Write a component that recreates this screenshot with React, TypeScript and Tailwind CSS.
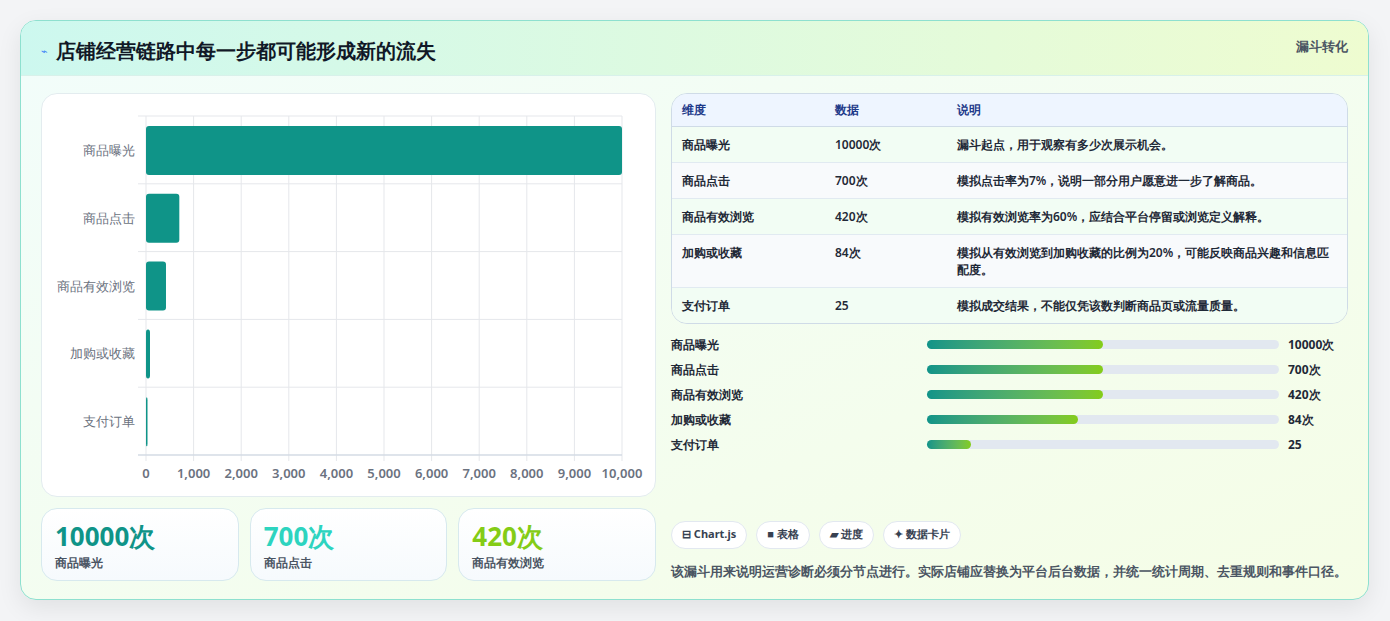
import React from 'react';

const rows = [
  { name: '商品曝光', value: '10000次', note: '漏斗起点，用于观察有多少次展示机会。' },
  { name: '商品点击', value: '700次', note: '模拟点击率为7%，说明一部分用户愿意进一步了解商品。' },
  { name: '商品有效浏览', value: '420次', note: '模拟有效浏览率为60%，应结合平台停留或浏览定义解释。' },
  { name: '加购或收藏', value: '84次', note: '模拟从有效浏览到加购收藏的比例为20%，可能反映商品兴趣和信息匹配度。' },
  { name: '支付订单', value: '25', note: '模拟成交结果，不能仅凭该数判断商品页或流量质量。' },
];

const chartData = [10000, 700, 420, 84, 25];
const progress = [50, 50, 50, 43, 12.5];

const FunnelChart = () => {
  const left = 104, right = 580, top = 22, bottom = 361;
  const w = right - left;
  const rowH = (bottom - top) / 5;
  return (
    <svg width="615" height="403" className="block">
      {Array.from({ length: 11 }).map((_, i) => {
        const x = left + (w * i) / 10;
        return (
          <g key={i}>
            <line x1={x} y1={top} x2={x} y2={bottom + 6} stroke="#e5e7eb" />
            <text x={x} y={384} textAnchor="middle" fontSize="13" fill="#6b7280" fontWeight="600">
              {(i * 1000).toLocaleString('en-US')}
            </text>
          </g>
        );
      })}
      {Array.from({ length: 6 }).map((_, i) => (
        <line key={i} x1={left - 8} y1={top + rowH * i} x2={right} y2={top + rowH * i} stroke="#e5e7eb" />
      ))}
      <line x1={left - 8} y1={bottom} x2={right} y2={bottom} stroke="#cbd5e1" />
      {chartData.map((v, i) => {
        const y = top + rowH * i + 10;
        const bw = Math.max(1.5, (v / 10000) * w);
        return (
          <g key={i}>
            <rect x={left} y={y} width={bw} height={49} rx={3} fill="#0f9488" />
            <text x={left - 11} y={y + 29} textAnchor="end" fontSize="13" fill="#6b7280">
              {rows[i].name}
            </text>
          </g>
        );
      })}
    </svg>
  );
};

export default function App() {
  return (
    <div className="min-h-screen bg-[#f3f4f6] p-5 pr-[21px] font-['Liberation_Sans','Noto_Sans_CJK_SC',sans-serif]">
      <div className="rounded-2xl border border-[#8ee0cf] overflow-hidden shadow-[0_8px_24px_rgba(0,0,0,0.08)] bg-gradient-to-br from-[#f2fdfb] to-[#f5fde6]">
        <div className="h-[55px] flex items-start justify-between px-5 bg-gradient-to-r from-[#cdf8ef] to-[#eefcd0] border-b border-[#d8f1ea]">
          <div className="flex items-center gap-2 pt-[15px]">
            <span className="text-[11px] text-[#3b82f6]">⌁</span>
            <h1 className="text-[20px] font-bold text-[#111827]">店铺经营链路中每一步都可能形成新的流失</h1>
          </div>
          <span className="pt-[16px] text-[13px] font-bold text-[#4b5563]">漏斗转化</span>
        </div>
        <div className="flex gap-[15px] px-5 pt-[17px] pb-[18px]">
          <div className="w-[615px] flex flex-col gap-[11px]">
            <div className="h-[404px] rounded-2xl bg-white border border-[#e3ecef]">
              <FunnelChart />
            </div>
            <div className="grid grid-cols-3 gap-[11px]">
              {[
                { v: '10000次', l: '商品曝光', c: 'text-[#0f9488]' },
                { v: '700次', l: '商品点击', c: 'text-[#2dd4bf]' },
                { v: '420次', l: '商品有效浏览', c: 'text-[#84cc16]' },
              ].map((s) => (
                <div key={s.l} className="h-[73px] rounded-2xl border border-[#d7e9ee] bg-gradient-to-b from-white to-[#f6fafd] px-[13px] pt-[11px]">
                  <div className={`text-[26px] leading-[32px] font-bold ${s.c}`}>{s.v}</div>
                  <div className="text-[12px] font-semibold text-[#4b5563] mt-[2px]">{s.l}</div>
                </div>
              ))}
            </div>
          </div>
          <div className="flex-1 flex flex-col">
            <div className="rounded-2xl border border-[#cfdbe7] overflow-hidden text-[12px] font-semibold text-[#1f2937]">
              <div className="flex h-[33px] items-center bg-[#eef5ff] text-[#1e3a8a] border-b border-[#cfdbe7]">
                <div className="w-[163px] pl-[10px]">维度</div>
                <div className="w-[122px]">数据</div>
                <div className="flex-1">说明</div>
              </div>
              {rows.map((r, i) => (
                <div key={r.name} className={`flex items-center py-[9px] leading-[17px] border-b border-[#e1eaf1] last:border-b-0 ${i % 2 === 0 ? 'bg-[#f2fdf4]' : 'bg-[#f8fafc]'}`}>
                  <div className="w-[163px] pl-[10px] self-start">{r.name}</div>
                  <div className="w-[122px] self-start">{r.value}</div>
                  <div className="flex-1 pr-[10px]">{r.note}</div>
                </div>
              ))}
            </div>
            <div className="mt-[12px] flex flex-col gap-[8px]">
              {rows.map((r, i) => (
                <div key={r.name} className="flex items-center h-[17px] text-[12px] font-bold text-[#1f2937]">
                  <div className="w-[256px]">{r.name}</div>
                  <div className="w-[352px] h-[9px] rounded-full bg-[#e2e8f0]">
                    <div className="h-full rounded-full bg-gradient-to-r from-[#0f9488] to-[#84cc16]" style={{ width: `${progress[i]}%` }} />
                  </div>
                  <div className="ml-[9px]">{r.value}</div>
                </div>
              ))}
            </div>
            <div className="mt-auto flex gap-[9px]">
              {['⊟ Chart.js', '■ 表格', '▰ 进度', '✦ 数据卡片'].map((t) => (
                <span key={t} className="h-[28px] px-[10px] flex items-center rounded-full border border-[#e2e8f0] bg-white text-[11px] font-bold text-[#374151]">{t}</span>
              ))}
            </div>
            <p className="mt-[13px] text-[13px] font-semibold text-[#4b5563]">该漏斗用来说明运营诊断必须分节点进行。实际店铺应替换为平台后台数据，并统一统计周期、去重规则和事件口径。</p>
          </div>
        </div>
      </div>
    </div>
  );
}
